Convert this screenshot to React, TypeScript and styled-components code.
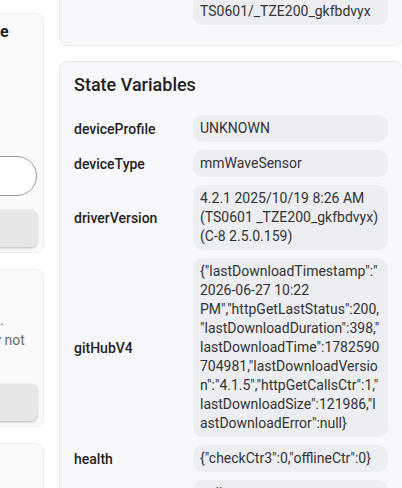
import styled, { createGlobalStyle } from "styled-components";

const GlobalStyle = createGlobalStyle`
  html, body {
    margin: 0;
    padding: 0;
    background: #ffffff;
    overflow: hidden;
  }
  body {
    font-family: Roboto, "Noto Sans", "Liberation Sans", sans-serif;
    color: #222;
  }
`;

type Row = { name: string; value: string };

const deviceRows: Row[] = [
  { name: "manufacturer", value: "_TZE200_gkfbdvyx" },
  { name: "model", value: "TS0601" },
  { name: "deviceModel", value: "Tuya ZigBee mmWave Presence Sensor TS0601/_TZE200_gkfbdvyx" },
];

const stateRows: Row[] = [
  { name: "deviceProfile", value: "UNKNOWN" },
  { name: "deviceType", value: "mmWaveSensor" },
  {
    name: "driverVersion",
    value: "4.2.1 2025/10/19 8:26 AM (TS0601 _TZE200_gkfbdvyx) (C-8 2.5.0.159)",
  },
  {
    name: "gitHubV4",
    value:
      '{"lastDownloadTimestamp":"2026-06-27 10:22 PM","httpGetLastStatus":200,"lastDownloadDuration":398,"lastDownloadTime":1782590704981,"lastDownloadVersion":"4.1.5","httpGetCallsCtr":1,"lastDownloadSize":121986,"lastDownloadError":null}',
  },
  { name: "health", value: '{"checkCtr3":0,"offlineCtr":0}' },
  { name: "healthStatus", value: "online" },
  { name: "lastPresence", value: "2026-06-27 10:20 PM" },
];

function App() {
  return (
    <>
      <GlobalStyle />
      <Page>
        <SideColumn>
          <SideCard>
            <SideTitle>Change Device Mode</SideTitle>
            <Hint>
              Pick the radar mode
              <br />
              used by this sensor
              <br />
              after next refresh
            </Hint>
            <FieldLabel>Mode</FieldLabel>
            <TextInput defaultValue="" />
            <ActionButton>Apply</ActionButton>
          </SideCard>
          <SideCard>
            <SideTitle>Reset Statistics</SideTitle>
            <Hint>
              Clean all counters right.
              <br />
              Some of the totals may not
              <br />
              come back.
            </Hint>
            <ActionButton>Reset</ActionButton>
          </SideCard>
          <SideCard>
            <SideTitle>Refresh</SideTitle>
            <Hint>Read all attributes</Hint>
          </SideCard>
        </SideColumn>

        <MainColumn>
          <InfoCard>
            <CardTitle>Device Data</CardTitle>
            {deviceRows.map((r) => (
              <VarRow key={r.name}>
                <VarName>{r.name}</VarName>
                <VarValue>{r.value}</VarValue>
              </VarRow>
            ))}
          </InfoCard>
          <InfoCard>
            <CardTitle>State Variables</CardTitle>
            {stateRows.map((r) => (
              <VarRow key={r.name}>
                <VarName>{r.name}</VarName>
                <VarValue>{r.value}</VarValue>
              </VarRow>
            ))}
          </InfoCard>
        </MainColumn>
      </Page>
    </>
  );
}

const Page = styled.div`
  display: grid;
  grid-template-columns: 200px 344px;
  column-gap: 15px;
  align-items: start;
  margin-left: -156px;
`;

const SideColumn = styled.div`
  display: flex;
  flex-direction: column;
  gap: 16px;
  margin-top: 13px;
`;

const SideCard = styled.section`
  display: flex;
  flex-direction: column;
  background: #fafafa;
  border: 1px solid #efefef;
  border-radius: 8px;
  padding: 8px 6px 5px 12px;
`;

const SideTitle = styled.h4`
  margin: 0;
  font-size: 16px;
  line-height: 20px;
  font-weight: 700;
  color: #1e1e1e;
  white-space: nowrap;
`;

const Hint = styled.p`
  margin: 12px 0 0;
  font-size: 14px;
  line-height: 20px;
  color: #666;
  white-space: nowrap;
`;

const FieldLabel = styled.label`
  margin-top: 12px;
  font-size: 14px;
  line-height: 20px;
  color: #444;
`;

const TextInput = styled.input`
  box-sizing: border-box;
  margin-top: 10px;
  height: 40px;
  width: 100%;
  border: 1px solid #9a9a9a;
  border-radius: 20px;
  background: #fff;
  padding: 0 14px;
  font: inherit;
`;

const ActionButton = styled.button`
  margin-top: 14px;
  height: 37px;
  width: 100%;
  border: none;
  border-radius: 6px;
  background: #e6e6e6;
  box-shadow: 0 1px 3px rgba(0, 0, 0, 0.28);
  font: inherit;
  font-size: 14px;
  color: #444;
`;

const MainColumn = styled.div`
  display: flex;
  flex-direction: column;
  gap: 15px;
  margin-top: -164px;
`;

const InfoCard = styled.section`
  background: #f8f8fc;
  border: 1px solid #eaeaf0;
  border-radius: 8px;
  padding: 12px 14px;
`;

const CardTitle = styled.h3`
  margin: 0 0 20px;
  font-size: 18px;
  line-height: 21px;
  font-weight: 500;
  color: #1f1f1f;
`;

const VarRow = styled.div`
  display: grid;
  grid-template-columns: 111px 1fr;
  column-gap: 8px;
  align-items: center;
  margin-bottom: 8px;
`;

const VarName = styled.div`
  font-size: 14px;
  font-weight: 500;
  color: #1f1f1f;
`;

const VarValue = styled.div`
  background: #eceef2;
  border-radius: 10px;
  padding: 4px 7px;
  font-size: 14px;
  line-height: 19px;
  color: #333;
  overflow-wrap: anywhere;
`;

export default App;
